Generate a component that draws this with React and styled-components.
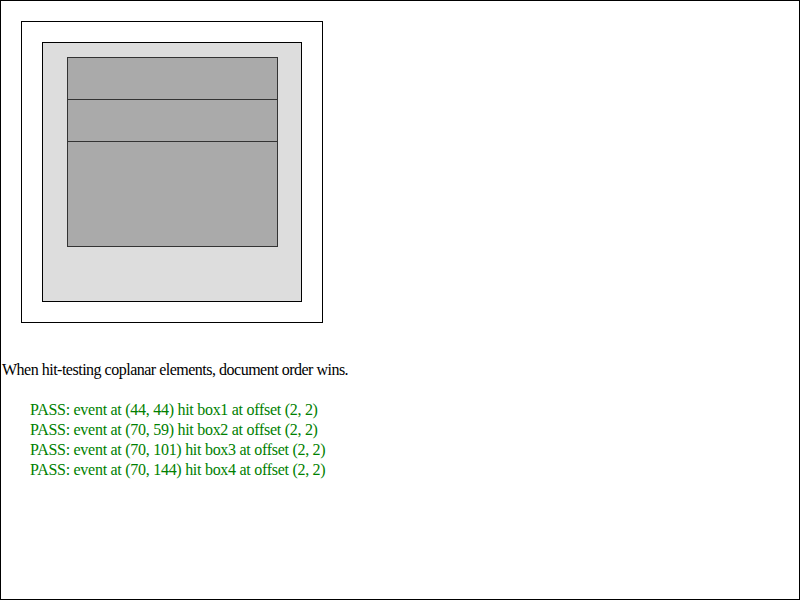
import React from 'react'
import styled, { createGlobalStyle } from 'styled-components'

const GlobalStyle = createGlobalStyle`
	html, body {
		margin: 0;
		padding: 0;
		background: #fff;
	}
	body {
		font-family: 'Liberation Serif', 'Times New Roman', serif;
		font-size: 16px;
		color: #000;
	}
`

const results = [
	{ x: 44, y: 44, box: 'box1' },
	{ x: 70, y: 59, box: 'box2' },
	{ x: 70, y: 101, box: 'box3' },
	{ x: 70, y: 144, box: 'box4' },
]

const boxes = [
	{ id: 'box1', top: 14, height: 100 },
	{ id: 'box2', top: 56, height: 100 },
	{ id: 'box3', top: 98, height: 66 },
	{ id: 'box4', top: 98, height: 106 },
]

const App = () => (
	<Page>
		<GlobalStyle />
		<Container>
			<Stage>
				{boxes.map(b => (
					<Box key={b.id} $top={b.top} $height={b.height} />
				))}
			</Stage>
		</Container>
		<Description>When hit-testing coplanar elements, document order wins.</Description>
		<Results>
			{results.map(r => (
				<ResultLine key={r.box}>
					PASS: event at ({r.x}, {r.y}) hit {r.box} at offset (2, 2)
				</ResultLine>
			))}
		</Results>
	</Page>
)

const Page = styled.div`
	box-sizing: border-box;
	width: 800px;
	height: 600px;
	border: 1px solid #000;
	overflow: hidden;
`

const Container = styled.div`
	margin: 20px;
	padding: 20px;
	box-sizing: border-box;
	width: 302px;
	height: 302px;
	border: 1px solid #000;
`

const Stage = styled.div`
	position: relative;
	box-sizing: border-box;
	width: 260px;
	height: 260px;
	border: 1px solid #000;
	background: #ddd;
`

const Box = styled.div`
	position: absolute;
	left: 24px;
	top: ${p => p.$top}px;
	box-sizing: border-box;
	width: 211px;
	height: ${p => p.$height}px;
	border: 1px solid #333;
	background: #aaa;
`

const Description = styled.p`
	margin: 38px 0 0 1px;
	line-height: 18px;
	letter-spacing: -0.5px;
`

const Results = styled.div`
	margin: 21px 0 0 29px;
	color: #008000;
	letter-spacing: -0.28px;
`

const ResultLine = styled.div`
	line-height: 20px;
`

export default App
